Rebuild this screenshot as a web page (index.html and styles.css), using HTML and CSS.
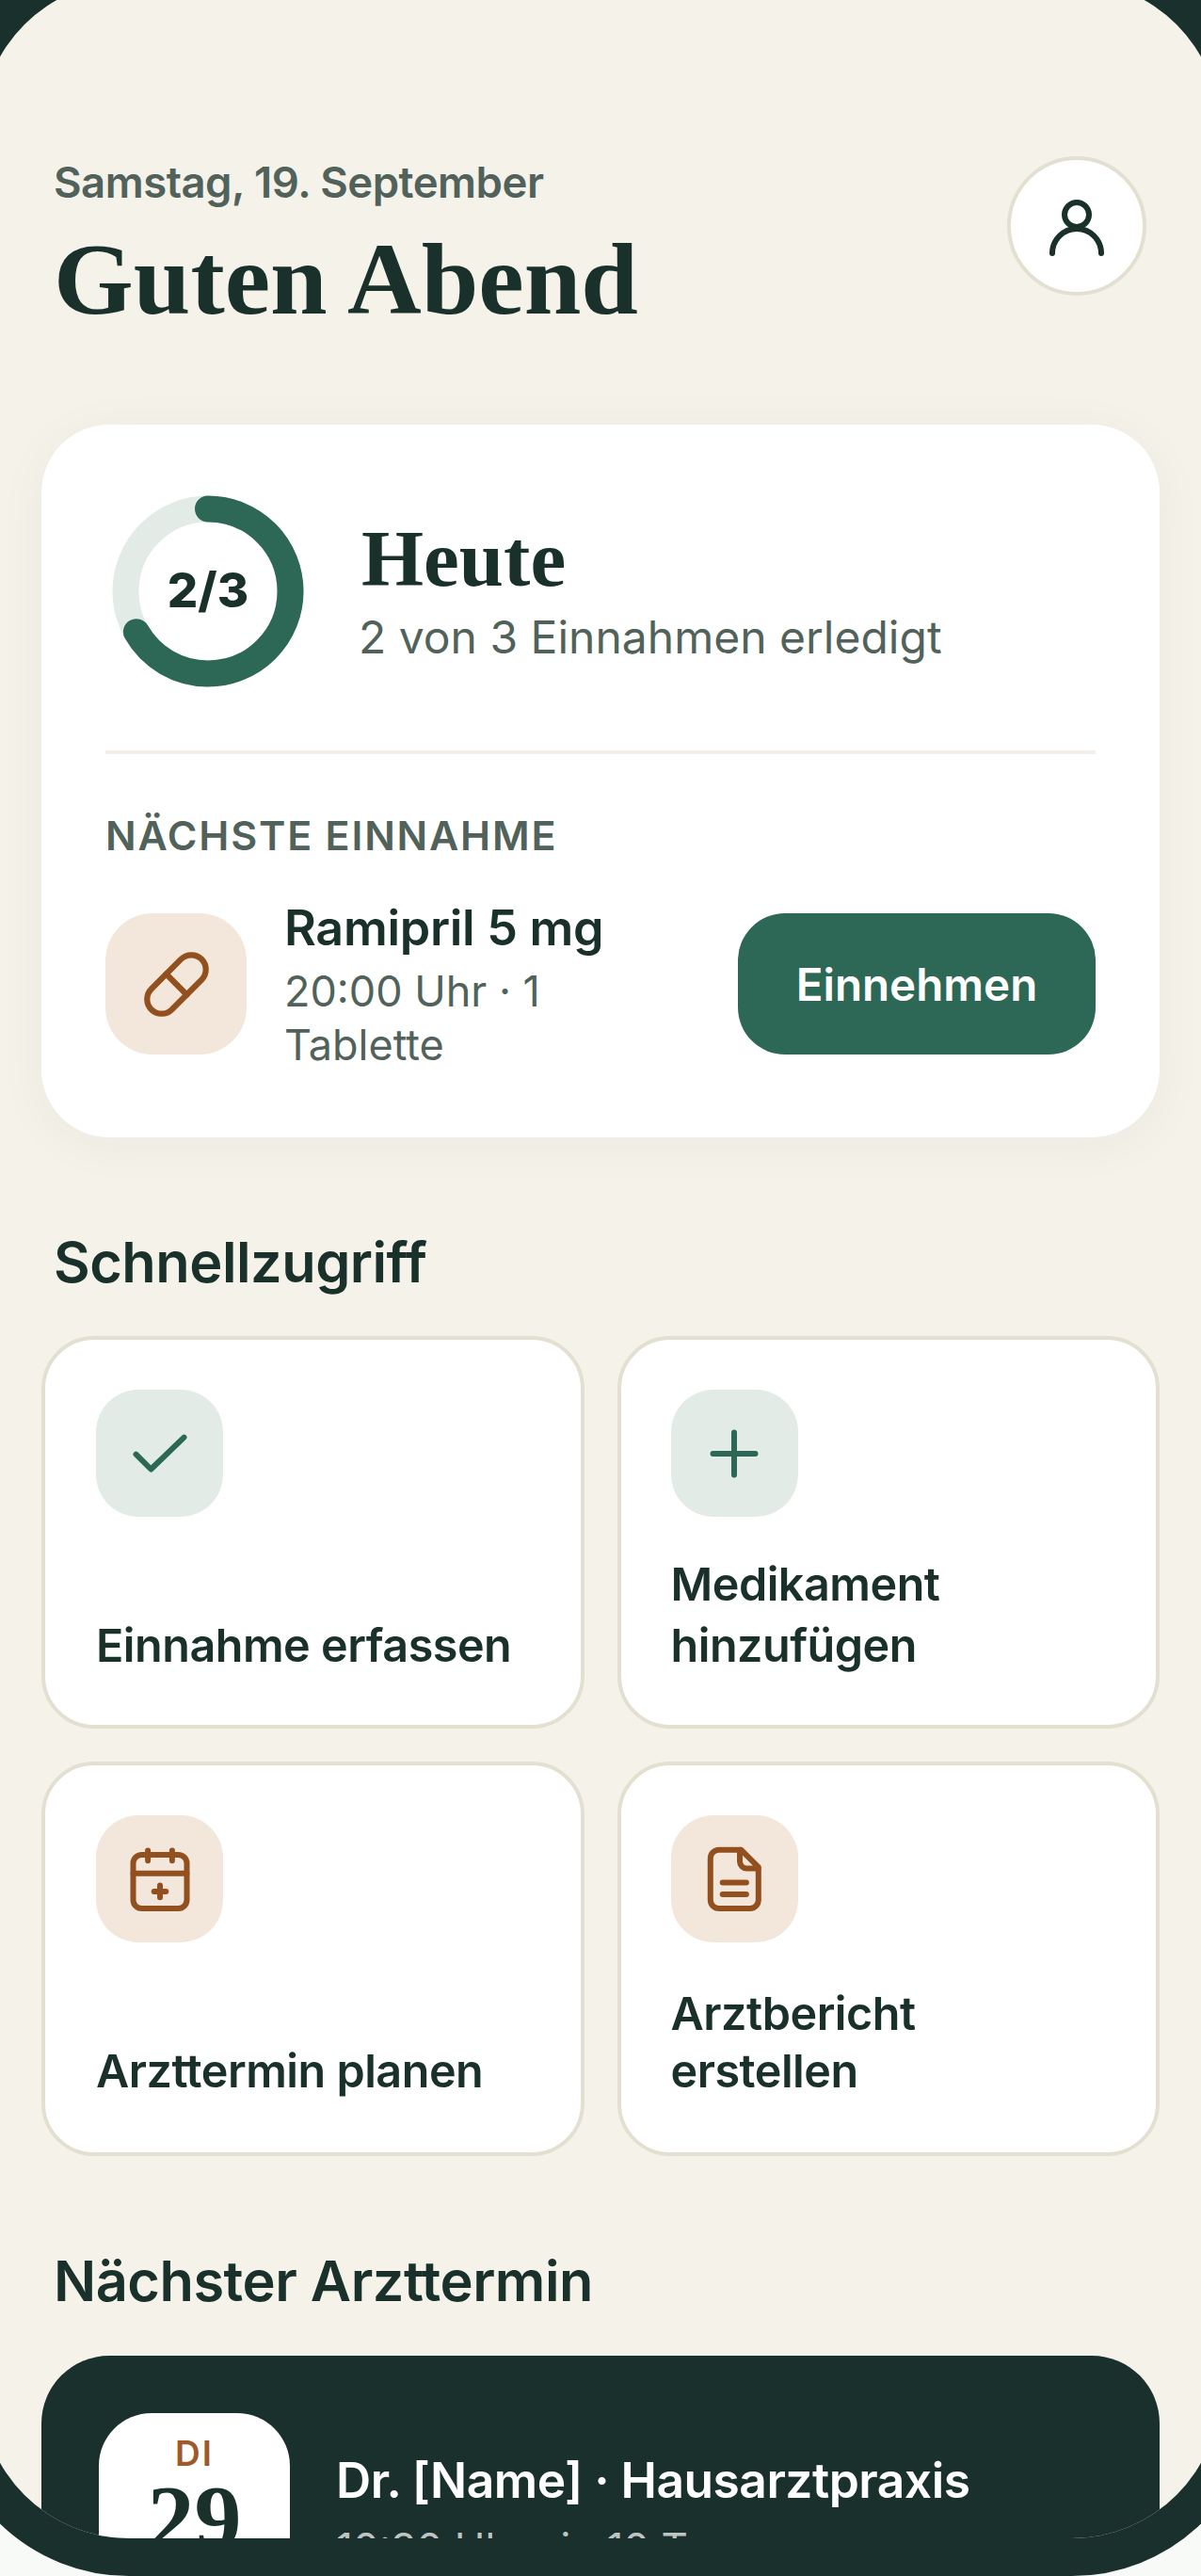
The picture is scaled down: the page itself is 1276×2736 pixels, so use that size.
FILE: index.html
```html
<!DOCTYPE html>
<html lang="de">
<head>
    <meta charset="UTF-8">
    <meta name="viewport" content="width=device-width, initial-scale=1.0">
    <title>Guten Abend</title>
    <link rel="stylesheet" href="styles.css">
</head>
<body>
    <div class="device">
        <main class="screen">
            <header class="header">
                <div>
                    <p class="date">Samstag, 19. September</p>
                    <h1 class="greeting">Guten Abend</h1>
                </div>
                <button class="avatar" aria-label="Profil">
                    <svg width="64" height="64" viewBox="0 0 64 64" fill="none" stroke="#19302b" stroke-width="6" stroke-linecap="round">
                        <circle cx="32" cy="20" r="13"/>
                        <path d="M6 61a26 26 0 0 1 52 0"/>
                    </svg>
                </button>
            </header>

            <section class="hero">
                <div class="hero-top">
                    <div class="ring">
                        <svg width="204" height="204" viewBox="0 0 204 204" fill="none" stroke-width="28">
                            <circle cx="102" cy="102" r="87.5" stroke="#e3ebe6"/>
                            <circle cx="102" cy="102" r="87.5" stroke="#2d6857" stroke-linecap="round" stroke-dasharray="366.5 549.8" transform="rotate(-90 102 102)"/>
                        </svg>
                        <span class="ring-text">2/3</span>
                    </div>
                    <div>
                        <h2 class="hero-title">Heute</h2>
                        <p class="hero-sub">2 von 3 Einnahmen erledigt</p>
                    </div>
                </div>
                <div class="divider"></div>
                <p class="next-label">NÄCHSTE EINNAHME</p>
                <div class="next-row">
                    <div class="icon-box icon-box-warm next-icon">
                        <svg class="icon icon-pill" viewBox="0 0 24 24">
                            <path d="m10.5 20.5 10-10a4.95 4.95 0 1 0-7-7l-10 10a4.95 4.95 0 1 0 7 7Z"/>
                            <path d="m8.5 8.5 7 7"/>
                        </svg>
                    </div>
                    <div class="next-text">
                        <p class="next-name">Ramipril 5 mg</p>
                        <p class="next-time">20:00 Uhr · 1 Tablette</p>
                    </div>
                    <button class="take-btn">Einnehmen</button>
                </div>
            </section>

            <h2 class="section-title">Schnellzugriff</h2>
            <div class="quick-grid">
                <a class="quick-card">
                    <div class="icon-box icon-box-green">
                        <svg class="icon" viewBox="0 0 24 24"><path d="M20.5 6.2 8.8 17.5 3.5 12.2"/></svg>
                    </div>
                    <span class="quick-label">Einnahme erfassen</span>
                </a>
                <a class="quick-card">
                    <div class="icon-box icon-box-green">
                        <svg class="icon" viewBox="0 0 24 24"><path d="M12 4.5v15M4.5 12h15"/></svg>
                    </div>
                    <span class="quick-label">Medikament hinzufügen</span>
                </a>
                <a class="quick-card quick-card-low">
                    <div class="icon-box icon-box-warm">
                        <svg class="icon" viewBox="0 0 24 24">
                            <rect x="2.5" y="3.3" width="19" height="19" rx="3"/>
                            <path d="M7.7 1.8v3.6M16.3 1.8v3.6M2.5 9.9h19M12 14.2v4.2M9.9 16.3h4.2"/>
                        </svg>
                    </div>
                    <span class="quick-label">Arzttermin planen</span>
                </a>
                <a class="quick-card quick-card-low">
                    <div class="icon-box icon-box-warm">
                        <svg class="icon" viewBox="0 0 24 24">
                            <path d="M6.6 1.6h7.9l6.1 6.1v11.6a3 3 0 0 1-3 3H6.6a3 3 0 0 1-3-3V4.6a3 3 0 0 1 3-3Z"/>
                            <path d="M14 1.6v4.1a2.5 2.5 0 0 0 2.5 2.5h4M7.9 13.2h8.4M7.9 17.3h8.4"/>
                        </svg>
                    </div>
                    <span class="quick-label">Arztbericht erstellen</span>
                </a>
            </div>

            <h2 class="section-title">Nächster Arzttermin</h2>
            <section class="appointment">
                <div class="date-tile">
                    <span class="date-day">DI</span>
                    <span class="date-num">29</span>
                </div>
                <div class="appt-text">
                    <p class="appt-name">Dr. [Name] · Hausarztpraxis</p>
                    <p class="appt-time">10:30 Uhr · in 10 Tagen</p>
                </div>
            </section>
        </main>
    </div>
</body>
</html>
```

FILE: styles.css
```css
html, body {
    margin: 0;
    height: 2736px;
    overflow: hidden;
}
body {
    background-color: #f8faf8;
    font-family: "Inter", "Noto Sans", sans-serif;
    color: #19302b;
}
p, h1, h2 {
    margin: 0;
}
button {
    font-family: inherit;
    border: none;
    padding: 0;
}

/* Phone frame, runs off the canvas on three sides */
.device {
    box-sizing: border-box;
    width: 1396px;
    height: 2796px;
    margin: -60px 0 0 -60px;
    border: 40px solid #1a302c;
    border-radius: 197px;
    background-color: #1a302c;
}
.screen {
    box-sizing: border-box;
    height: 100%;
    padding: 186px 64px 0;
    background-color: #f5f2ea;
    border-radius: 157px;
    overflow: hidden;
}

.header {
    display: flex;
    justify-content: space-between;
    align-items: flex-start;
    padding: 0 14px 0 13px;
}
.date {
    font-size: 45.5px;
    line-height: 56px;
    font-weight: 600;
    letter-spacing: -0.5px;
    color: #51625b;
}
.greeting {
    margin-top: 15px;
    font-family: "Liberation Serif", serif;
    font-size: 109px;
    line-height: 120px;
    font-weight: 700;
}
.avatar {
    display: flex;
    align-items: center;
    justify-content: center;
    box-sizing: border-box;
    width: 148px;
    height: 148px;
    background-color: #fff;
    border: 4px solid #e3dfd1;
    border-radius: 50%;
}

/* Today card */
.hero {
    margin-top: 94px;
    padding: 68px;
    background-color: #fff;
    border-radius: 72px;
    box-shadow: 0 8px 56px rgba(26, 48, 44, 0.045);
}
.hero-top {
    display: flex;
    align-items: center;
    gap: 54px;
}
.ring {
    position: relative;
    display: flex;
    align-items: center;
    justify-content: center;
    width: 218px;
    height: 218px;
}
.ring-text {
    position: absolute;
    margin-top: -4px;
    font-size: 51px;
    font-weight: 800;
}
.hero-title {
    font-family: "Liberation Serif", serif;
    font-size: 85px;
    line-height: 88px;
    font-weight: 700;
}
.hero-sub {
    margin: 10px 0 0 -3px;
    font-size: 48px;
    line-height: 60px;
    color: #51625b;
}
.divider {
    height: 4px;
    margin-top: 60px;
    background-color: #f3efe8;
}
.next-label {
    margin-top: 59px;
    font-size: 43px;
    line-height: 54px;
    font-weight: 600;
    letter-spacing: 1.8px;
    color: #51625b;
}
.next-row {
    display: flex;
    align-items: center;
    gap: 40px;
    height: 190px;
    margin-top: 36px;
}
.next-text {
    flex: 1;
}
.next-name {
    font-size: 52px;
    line-height: 66px;
    font-weight: 600;
    letter-spacing: -0.3px;
}
.next-time {
    margin-top: 5px;
    font-size: 45px;
    line-height: 57px;
    color: #51625b;
}
.take-btn {
    flex: none;
    width: 380px;
    height: 150px;
    background-color: #2d6857;
    color: #fff;
    font-size: 47.5px;
    font-weight: 600;
    border-radius: 50px;
}

.icon-box {
    display: flex;
    align-items: center;
    justify-content: center;
    flex: none;
    width: 135px;
    height: 135px;
    border-radius: 45px;
}
.icon-box.next-icon {
    width: 150px;
    height: 150px;
    border-radius: 50px;
}
.icon-box-green {
    background-color: #e3ebe6;
    color: #2d6857;
}
.icon-box-warm {
    background-color: #f3e6da;
    color: #93501f;
}
.icon {
    width: 72px;
    height: 72px;
    fill: none;
    stroke: currentColor;
    stroke-width: 2;
    stroke-linecap: round;
    stroke-linejoin: round;
}
.icon-pill {
    width: 75px;
    height: 75px;
}

.section-title {
    margin-top: 94px;
    padding: 0 13px;
    font-size: 59.5px;
    line-height: 76px;
    font-weight: 600;
    letter-spacing: -0.5px;
}
.quick-grid {
    display: grid;
    grid-template-columns: 1fr 1fr;
    grid-template-rows: 417px 419px;
    gap: 35px;
    margin-top: 41px;
}
.quick-card {
    display: flex;
    flex-direction: column;
    justify-content: space-between;
    box-sizing: border-box;
    padding: 53px 53px 52px 54px;
    background-color: #fff;
    border: 4px solid #e3dfd1;
    border-radius: 56px;
}
.quick-card:nth-child(even) {
    padding-left: 53px;
}
.quick-label {
    font-size: 48.5px;
    line-height: 65px;
    font-weight: 600;
    letter-spacing: -0.5px;
}
.quick-card-low {
    padding-bottom: 56px;
}
.quick-card-low .quick-label {
    line-height: 61px;
}

/* Appointment card, cut off by the screen edge */
.appointment {
    display: flex;
    align-items: center;
    gap: 49px;
    margin-top: 42px;
    padding: 61px;
    background-color: #1a302c;
    border-radius: 72px;
}
.date-tile {
    display: flex;
    flex-direction: column;
    align-items: center;
    box-sizing: border-box;
    flex: none;
    width: 203px;
    height: 203px;
    padding-top: 21px;
    background-color: #fff;
    border-radius: 56px;
}
.date-day {
    font-size: 37px;
    line-height: 44px;
    font-weight: 600;
    letter-spacing: 2px;
    color: #a0592a;
}
.date-num {
    margin-top: -1px;
    font-family: "Liberation Serif", serif;
    font-size: 100px;
    line-height: 96px;
    font-weight: 700;
}
.appt-text {
    padding-top: 6px;
}
.appt-name {
    font-size: 51.5px;
    line-height: 68px;
    font-weight: 600;
    letter-spacing: -0.5px;
    color: #fff;
}
.appt-time {
    margin-top: 8px;
    font-size: 44px;
    line-height: 60px;
    color: rgba(255, 255, 255, 0.72);
}
```
